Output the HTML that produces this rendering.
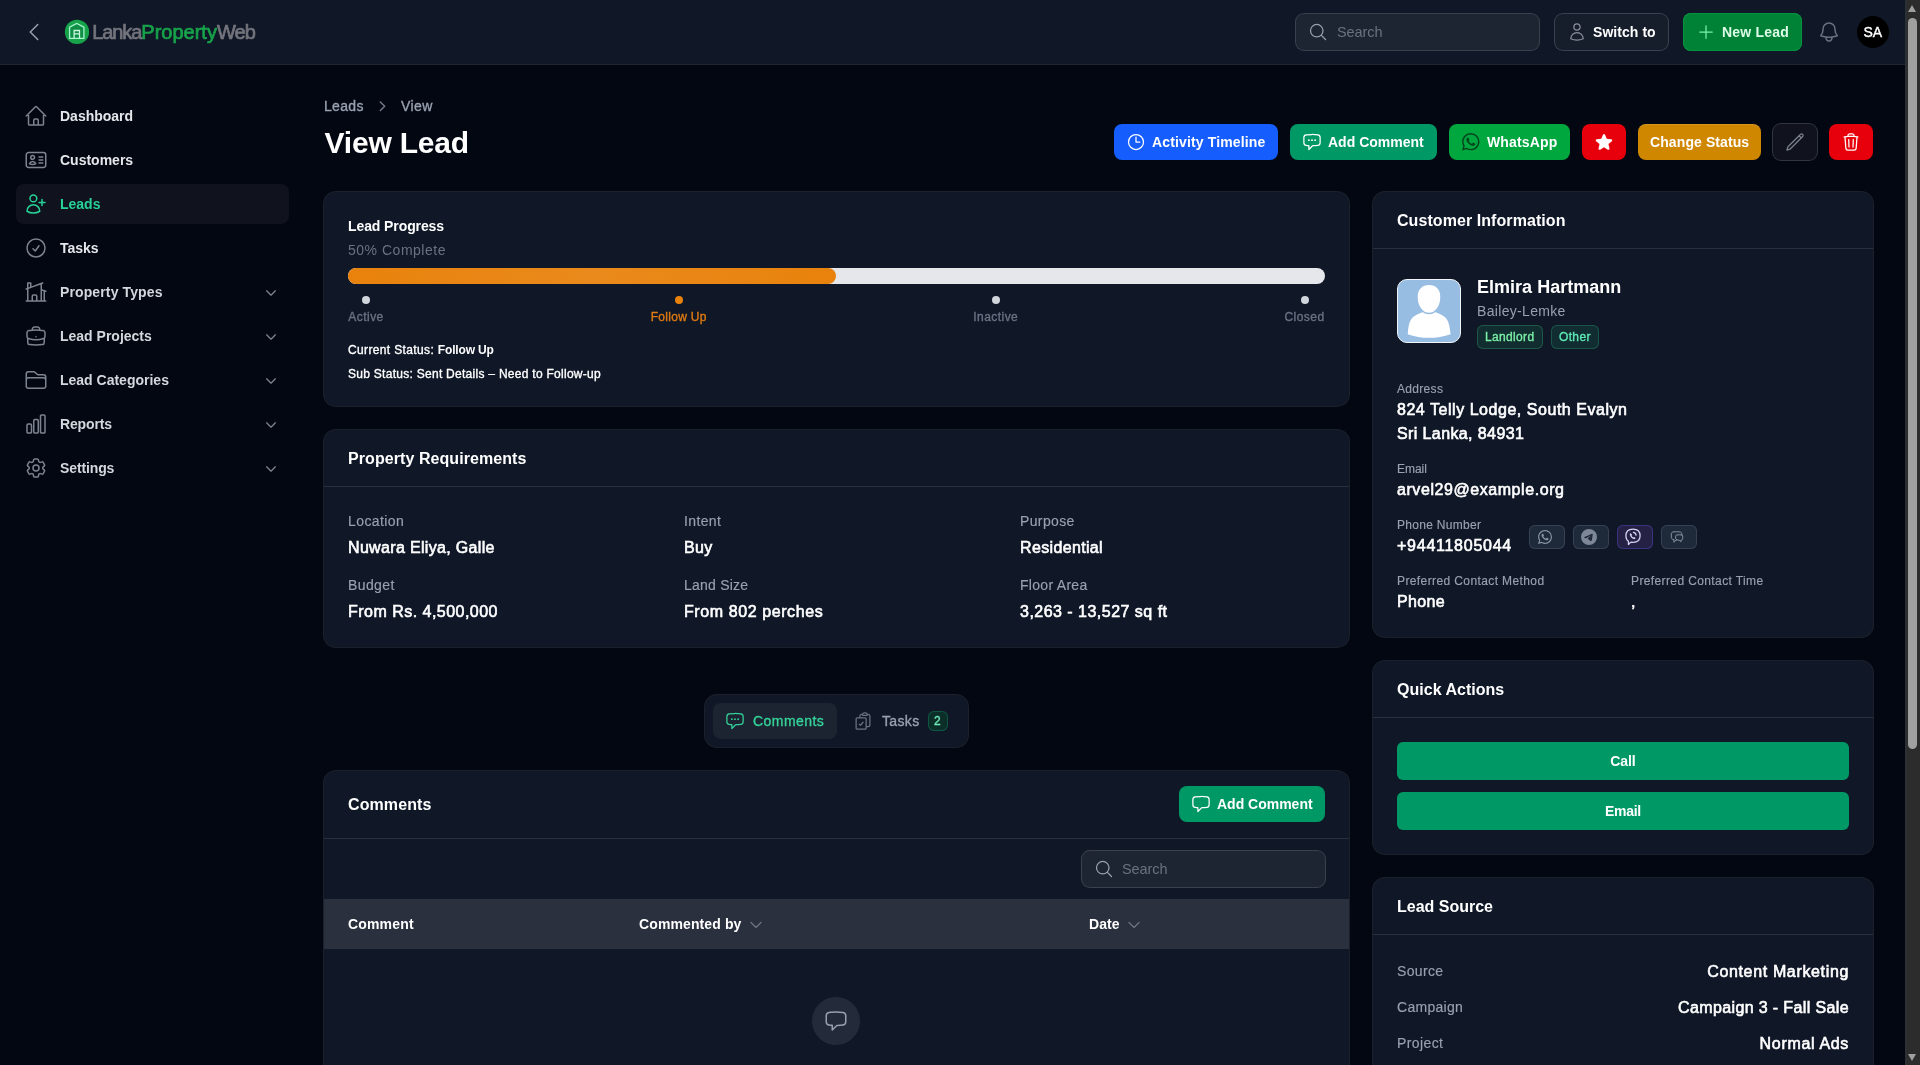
<!DOCTYPE html>
<html lang="en">
<head>
<meta charset="utf-8">
<title>View Lead - LankaPropertyWeb</title>
<style>
*{box-sizing:border-box;margin:0;padding:0}
html,body{width:1920px;height:1065px;overflow:hidden;background:#030712;color:#fff;
  font-family:"Liberation Sans",sans-serif;font-size:14px;line-height:20px}
svg{display:block}
.abs{position:absolute}
.ico{fill:none;stroke:currentColor;stroke-width:1.5;stroke-linecap:round;stroke-linejoin:round}
.t{position:absolute;white-space:nowrap;display:block}
.m{-webkit-text-stroke:0.35px currentColor}
.v{-webkit-text-stroke:0.600px currentColor}
.b{font-weight:700}
.cx{transform:translateX(-50%)}
/* topbar */
#topbar{position:absolute;left:0;top:0;width:1905px;height:64px;background:#101828;border-bottom:1px solid #1d2432;height:65px}
#sidebar,#main{position:absolute;left:0;top:0;width:0;height:0}
#topbar,#sidebar,#main{will-change:transform}
/* sidebar */
.nav{position:absolute;left:16px;width:273px;height:40px;border-radius:8px;color:#7d838f}
.nav svg.i{position:absolute;left:8px;top:8px;width:24px;height:24px}
.nav svg.c{position:absolute;left:248px;top:13.500px;width:14px;height:14px;stroke-width:2.200;color:#7d838f}
.nav .t{left:44px;top:10px;color:#e5e7eb;font-size:14px;line-height:20px}
.nav .t.g{color:#d4d7dd}
.nav.act{background:#10131e;color:#27d298}
.nav.act .t{color:#27d298}
/* cards */
.card{position:absolute;background:#101828;border-radius:12px;box-shadow:0 0 0 1px rgba(255,255,255,.1)}
.hr{position:absolute;left:0;right:0;height:1px;background:rgba(255,255,255,.1)}
.btn{position:absolute;height:36px;border-radius:8px;color:#fff}
.lbl{color:#99a1af;-webkit-text-stroke:0.150px currentColor}
/* scrollbar */
#sb{position:absolute;left:1905px;top:0;width:15px;height:1065px;background:#2c2c2c;border-left:2px solid #2c3032}
#sb .th{position:absolute;left:1px;top:18px;width:9px;height:731px;border-radius:5px;background:#a0a0a0}
#sb .up{position:absolute;left:1px;top:5px;width:0;height:0;border-left:4.5px solid transparent;border-right:4.5px solid transparent;border-bottom:7px solid #9f9f9f}
#sb .dn{position:absolute;left:1px;top:1054px;width:0;height:0;border-left:4.5px solid transparent;border-right:4.5px solid transparent;border-top:7px solid #9f9f9f}
</style>
</head>
<body>
<!-- TOPBAR -->
<header id="topbar">
  <svg class="abs ico" style="left:22px;top:20px;width:24px;height:24px;color:#99a1af" viewBox="0 0 24 24"><path d="M15.75 19.5 8.25 12l7.5-7.5"/></svg>
  <!-- logo -->
  <svg class="abs" style="left:64px;top:19px;width:26px;height:26px" viewBox="0 0 26 26">
    <circle cx="13" cy="12.900" r="12.150" fill="#16a34a"/>
    <path d="M5.600 19.400V8.100l7.150-3.700 7.150 3.700v11.300Z" fill="#0f8f45" stroke="#a7f3d0" stroke-width="1.300" stroke-linejoin="miter"/>
    <path d="M10.100 19.400v-7.900h5.400v7.900M10.100 14.900h5.400" fill="none" stroke="#c9f7de" stroke-width="1.300"/>
  </svg>
  <span class="t" id="logo" style="left:92.300px;top:20px;font-size:20px;line-height:24px;color:#74747c;-webkit-text-stroke:0.7px currentColor"><span style="letter-spacing:-1.100px">Lanka</span><span style="color:#17a34a;letter-spacing:0px">Property</span><span style="letter-spacing:-0.900px">Web</span></span>
  <!-- search -->
  <div class="abs" style="left:1296px;top:14px;width:243px;height:36px;border-radius:8px;background:#1d2432;box-shadow:0 0 0 1px #3a404d">
    <svg class="abs ico" style="left:12px;top:8px;width:20px;height:20px;color:#99a1af" viewBox="0 0 24 24"><path d="m21 21-5.197-5.197m0 0A7.5 7.5 0 1 0 5.196 5.196a7.5 7.5 0 0 0 10.607 10.607Z"/></svg>
    <span class="t" style="left:41px;top:8px;color:#6a7282;font-size:14.5px;letter-spacing:-0.076px">Search</span>
  </div>
  <!-- switch to -->
  <div class="btn" style="left:1555px;top:14px;width:113px;background:#161d2b;box-shadow:0 0 0 1px #3a4150">
    <svg class="abs ico" style="left:12px;top:8px;width:20px;height:20px;color:#8a909c" viewBox="0 0 24 24"><path d="M15.75 6a3.75 3.75 0 1 1-7.5 0 3.75 3.75 0 0 1 7.5 0ZM4.501 20.118a7.5 7.5 0 0 1 14.998 0A17.933 17.933 0 0 1 12 21.75c-2.676 0-5.216-.584-7.499-1.632Z"/></svg>
    <span class="t b" style="left:38px;top:8px;letter-spacing:0.057px">Switch to</span>
  </div>
  <!-- new lead -->
  <div class="btn" style="left:1683px;top:13px;width:119px;height:38px;background:#008236;color:#dcfce7;box-shadow:0 0 0 1px #06933f inset">
    <svg class="abs ico" style="left:13px;top:9px;width:20px;height:20px;color:#7bf1a8" viewBox="0 0 24 24"><path d="M12 4.500v15m7.500-7.500h-15"/></svg>
    <span class="t b" style="left:39px;top:9px;letter-spacing:0.193px">New Lead</span>
  </div>
  <!-- bell -->
  <svg class="abs ico" style="left:1817px;top:20px;width:24px;height:24px;color:#6a7282" viewBox="0 0 24 24"><path d="M14.857 17.082a23.848 23.848 0 0 0 5.454-1.31A8.967 8.967 0 0 1 18 9.75V9A6 6 0 0 0 6 9v.75a8.967 8.967 0 0 1-2.312 6.022c1.733.64 3.56 1.085 5.455 1.31m5.714 0a24.255 24.255 0 0 1-5.714 0m5.714 0a3 3 0 1 1-5.714 0"/></svg>
  <!-- avatar -->
  <div class="abs" style="left:1857px;top:16px;width:32px;height:32px;border-radius:50%;background:#000"></div>
  <span class="t m" style="left:1863.500px;top:22px;font-size:14px;color:#fff">SA</span>
</header>

<!-- SIDEBAR -->
<nav id="sidebar">
  <div class="nav" style="top:96px">
    <svg class="i ico" viewBox="0 0 24 24"><path d="m2.25 12 8.954-8.955c.44-.439 1.152-.439 1.591 0L21.75 12M4.5 9.75v10.125c0 .621.504 1.125 1.125 1.125H9.75v-4.875c0-.621.504-1.125 1.125-1.125h2.25c.621 0 1.125.504 1.125 1.125V21h4.125c.621 0 1.125-.504 1.125-1.125V9.75M8.25 21h8.25"/></svg>
    <span class="t b">Dashboard</span>
  </div>
  <div class="nav" style="top:140px">
    <svg class="i ico" viewBox="0 0 24 24"><path d="M15 9h3.75M15 12h3.75M15 15h3.75M4.5 19.5h15a2.25 2.25 0 0 0 2.25-2.25V6.75A2.25 2.25 0 0 0 19.5 4.5h-15a2.25 2.25 0 0 0-2.25 2.25v10.5A2.25 2.25 0 0 0 4.500 19.500Zm6-10.125a1.875 1.875 0 1 1-3.750 0 1.875 1.875 0 0 1 3.750 0Zm1.294 6.336a6.721 6.721 0 0 1-3.170.789 6.721 6.721 0 0 1-3.168-.789 3.376 3.376 0 0 1 6.338 0Z"/></svg>
    <span class="t b">Customers</span>
  </div>
  <div class="nav act" style="top:184px">
    <svg class="i ico" viewBox="0 0 24 24"><path d="M18 7.5v3m0 0v3m0-3h3m-3 0h-3m-2.250-4.125a3.375 3.375 0 1 1-6.750 0 3.375 3.375 0 0 1 6.750 0ZM3 19.235v-.110a6.375 6.375 0 0 1 12.750 0v.109A12.318 12.318 0 0 1 9.374 21c-2.331 0-4.512-.645-6.374-1.766Z"/></svg>
    <span class="t b">Leads</span>
  </div>
  <div class="nav" style="top:228px">
    <svg class="i ico" viewBox="0 0 24 24"><path d="M9 12.75 11.25 15 15 9.750M21 12a9 9 0 1 1-18 0 9 9 0 0 1 18 0Z"/></svg>
    <span class="t b">Tasks</span>
  </div>
  <div class="nav" style="top:272px">
    <svg class="i ico" viewBox="0 0 24 24"><path d="M8.250 21v-4.875c0-.621.504-1.125 1.125-1.125h2.250c.621 0 1.125.504 1.125 1.125V21m0 0h4.500V3.545M12.750 21h7.500V10.750M2.250 21h1.500m18 0h-18M2.250 9l4.500-1.636M18.750 3l-1.500.545m0 6.205 3 1m1.500.500-1.500-.500M6.750 7.364V3h-3v18m3-13.636 10.500-3.819"/></svg>
    <span class="t b g" style="letter-spacing:0.120px">Property Types</span>
    <svg class="c ico" viewBox="0 0 24 24"><path d="m19.500 8.250-7.500 7.500-7.500-7.500"/></svg>
  </div>
  <div class="nav" style="top:316px">
    <svg class="i ico" viewBox="0 0 24 24"><path d="M20.250 14.150v4.250c0 1.094-.787 2.036-1.872 2.180-2.087.277-4.216.420-6.378.420s-4.291-.143-6.378-.420c-1.085-.144-1.872-1.086-1.872-2.180v-4.250m16.500 0a2.180 2.180 0 0 0 .750-1.661V8.706c0-1.081-.768-2.015-1.837-2.175a48.114 48.114 0 0 0-3.413-.387m4.500 8.006c-.194.165-.420.295-.673.380A23.978 23.978 0 0 1 12 15.750c-2.648 0-5.195-.429-7.577-1.220a2.016 2.016 0 0 1-.673-.380m0 0A2.180 2.180 0 0 1 3 12.489V8.706c0-1.081.768-2.015 1.837-2.175a48.111 48.111 0 0 1 3.413-.387m7.500 0V5.250A2.250 2.250 0 0 0 13.500 3h-3a2.250 2.250 0 0 0-2.250 2.250v.894m7.500 0a48.667 48.667 0 0 0-7.500 0M12 12.750h.008v.008H12v-.008Z"/></svg>
    <span class="t b g">Lead Projects</span>
    <svg class="c ico" viewBox="0 0 24 24"><path d="m19.500 8.250-7.500 7.500-7.500-7.500"/></svg>
  </div>
  <div class="nav" style="top:360px">
    <svg class="i ico" viewBox="0 0 24 24"><path d="M2.250 12.750V12A2.250 2.250 0 0 1 4.500 9.750h15A2.250 2.250 0 0 1 21.750 12v.750m-8.690-6.440-2.120-2.120a1.500 1.500 0 0 0-1.061-.440H4.500A2.250 2.250 0 0 0 2.250 6v12a2.250 2.250 0 0 0 2.250 2.250h15A2.250 2.250 0 0 0 21.750 18V9a2.250 2.250 0 0 0-2.250-2.250h-5.379a1.500 1.500 0 0 1-1.060-.440Z"/></svg>
    <span class="t b g">Lead Categories</span>
    <svg class="c ico" viewBox="0 0 24 24"><path d="m19.500 8.250-7.500 7.500-7.500-7.500"/></svg>
  </div>
  <div class="nav" style="top:404px">
    <svg class="i ico" viewBox="0 0 24 24"><path d="M3 13.125C3 12.504 3.504 12 4.125 12h2.250c.621 0 1.125.504 1.125 1.125v6.750C7.500 20.496 6.996 21 6.375 21h-2.250A1.125 1.125 0 0 1 3 19.875v-6.750ZM9.750 8.625c0-.621.504-1.125 1.125-1.125h2.250c.621 0 1.125.504 1.125 1.125v11.250c0 .621-.504 1.125-1.125 1.125h-2.250a1.125 1.125 0 0 1-1.125-1.125V8.625ZM16.500 4.125c0-.621.504-1.125 1.125-1.125h2.250C20.496 3 21 3.504 21 4.125v15.750c0 .621-.504 1.125-1.125 1.125h-2.250a1.125 1.125 0 0 1-1.125-1.125V4.125Z"/></svg>
    <span class="t b g" style="letter-spacing:-0.150px">Reports</span>
    <svg class="c ico" viewBox="0 0 24 24"><path d="m19.500 8.250-7.500 7.500-7.500-7.500"/></svg>
  </div>
  <div class="nav" style="top:448px">
    <svg class="i ico" viewBox="0 0 24 24"><path d="M9.594 3.940c.090-.542.560-.940 1.110-.940h2.593c.550 0 1.020.398 1.110.940l.213 1.281c.063.374.313.686.645.870.074.040.147.083.220.127.325.196.720.257 1.075.124l1.217-.456a1.125 1.125 0 0 1 1.370.490l1.296 2.247a1.125 1.125 0 0 1-.260 1.431l-1.003.827c-.293.241-.438.613-.430.992a7.723 7.723 0 0 1 0 .255c-.008.378.137.750.430.991l1.004.827c.424.350.534.955.260 1.430l-1.298 2.247a1.125 1.125 0 0 1-1.369.491l-1.217-.456c-.355-.133-.750-.072-1.076.124a6.470 6.470 0 0 1-.220.128c-.331.183-.581.495-.644.869l-.213 1.281c-.090.543-.560.940-1.110.940h-2.594c-.550 0-1.019-.398-1.110-.940l-.213-1.281c-.062-.374-.312-.686-.644-.870a6.520 6.520 0 0 1-.220-.127c-.325-.196-.720-.257-1.076-.124l-1.217.456a1.125 1.125 0 0 1-1.369-.490l-1.297-2.247a1.125 1.125 0 0 1 .260-1.431l1.004-.827c.292-.240.437-.613.430-.991a6.932 6.932 0 0 1 0-.255c.007-.380-.138-.751-.430-.992l-1.004-.827a1.125 1.125 0 0 1-.260-1.430l1.297-2.247a1.125 1.125 0 0 1 1.370-.491l1.216.456c.356.133.751.072 1.076-.124.072-.044.146-.086.220-.128.332-.183.582-.495.644-.869l.214-1.280Z"/><path d="M15 12a3 3 0 1 1-6 0 3 3 0 0 1 6 0Z"/></svg>
    <span class="t b g" style="letter-spacing:-0.120px">Settings</span>
    <svg class="c ico" viewBox="0 0 24 24"><path d="m19.500 8.250-7.500 7.500-7.500-7.500"/></svg>
  </div>
</nav>

<main id="main">
  <!-- breadcrumbs -->
  <span class="t m" style="left:324px;top:96px;color:#99a1af;font-size:14px;letter-spacing:0.319px">Leads</span>
  <svg class="abs ico" style="left:372px;top:96px;width:20px;height:20px;color:#727987" viewBox="0 0 20 20"><path d="M8.300 6 12.700 10.250 8.300 14.500"/></svg>
  <span class="t m" style="left:401px;top:96px;color:#99a1af;font-size:14px;letter-spacing:0.414px">View</span>
  <h1 class="t b" style="left:324.500px;top:124.500px;font-size:30px;line-height:36px;letter-spacing:-0.188px">View Lead</h1>

  <!-- header actions -->
  <div class="btn" style="left:1114px;top:124px;width:164px;background:#155dfc">
    <svg class="abs ico" style="left:12px;top:8px;width:20px;height:20px" viewBox="0 0 24 24"><path d="M12 6v6h4.500m4.500 0a9 9 0 1 1-18 0 9 9 0 0 1 18 0Z"/></svg>
    <span class="t b" style="left:38px;top:8px;letter-spacing:0.146px">Activity Timeline</span>
  </div>
  <div class="btn" style="left:1290px;top:124px;width:147px;background:#009966">
    <svg class="abs ico" style="left:12px;top:8px;width:20px;height:20px" viewBox="0 0 24 24"><path d="M8.625 9.750a.375.375 0 1 1-.750 0 .375.375 0 0 1 .750 0Zm0 0H8.250m4.125 0a.375.375 0 1 1-.750 0 .375.375 0 0 1 .750 0Zm0 0H12m4.125 0a.375.375 0 1 1-.750 0 .375.375 0 0 1 .750 0Zm0 0h-.375m-13.500 3.010c0 1.600 1.123 2.994 2.707 3.227 1.087.160 2.185.283 3.293.369V21l4.184-4.183a1.140 1.140 0 0 1 .778-.332 48.294 48.294 0 0 0 5.830-.498c1.585-.233 2.708-1.626 2.708-3.228V6.741c0-1.602-1.123-2.995-2.707-3.228A48.394 48.394 0 0 0 12 3c-2.392 0-4.744.175-7.043.513C3.373 3.746 2.250 5.140 2.250 6.741v6.018Z"/></svg>
    <span class="t b" style="left:38px;top:8px;letter-spacing:0.007px">Add Comment</span>
  </div>
  <div class="btn" style="left:1449px;top:124px;width:121px;background:#00a63e">
    <svg class="abs" style="left:13px;top:9.200px;width:17.500px;height:17.500px;fill:#03441c" viewBox="0 0 24 24"><path d="M17.472 14.382c-.297-.149-1.758-.867-2.030-.967-.273-.099-.471-.148-.670.150-.197.297-.767.966-.940 1.164-.173.199-.347.223-.644.075-.297-.150-1.255-.463-2.390-1.475-.883-.788-1.480-1.761-1.653-2.059-.173-.297-.018-.458.130-.606.134-.133.298-.347.446-.520.149-.174.198-.298.298-.497.099-.198.050-.371-.025-.520-.075-.149-.669-1.612-.916-2.207-.242-.579-.487-.500-.669-.510-.173-.008-.371-.010-.570-.010-.198 0-.520.074-.792.372-.272.297-1.040 1.016-1.040 2.479 0 1.462 1.065 2.875 1.213 3.074.149.198 2.096 3.200 5.077 4.487.709.306 1.262.489 1.694.625.712.227 1.360.195 1.871.118.571-.085 1.758-.719 2.006-1.413.248-.694.248-1.289.173-1.413-.074-.124-.272-.198-.570-.347m-5.421 7.403h-.004a9.870 9.870 0 01-5.031-1.378l-.361-.214-3.741.982.998-3.648-.235-.374a9.860 9.860 0 01-1.510-5.260c.001-5.450 4.436-9.884 9.888-9.884 2.640 0 5.122 1.030 6.988 2.898a9.825 9.825 0 012.893 6.994c-.003 5.450-4.437 9.884-9.885 9.884m8.413-18.297A11.815 11.815 0 0012.050 0C5.495 0 .160 5.335.157 11.892c0 2.096.547 4.142 1.588 5.945L.057 24l6.305-1.654a11.882 11.882 0 005.683 1.448h.005c6.554 0 11.890-5.335 11.893-11.893a11.821 11.821 0 00-3.480-8.413Z"/></svg>
    <span class="t b" style="left:38px;top:8px;letter-spacing:0.16px">WhatsApp</span>
  </div>
  <div class="btn" style="left:1582px;top:124px;width:44px;background:#e7000b">
    <svg class="abs" style="left:12px;top:8px;width:20px;height:20px;fill:#fff" viewBox="0 0 24 24"><path d="M10.788 3.210c.448-1.077 1.976-1.077 2.424 0l2.082 5.006 5.404.434c1.164.093 1.636 1.545.749 2.305l-4.117 3.527 1.257 5.273c.271 1.136-.964 2.033-1.960 1.425L12 18.354 7.373 21.180c-.996.608-2.231-.290-1.960-1.425l1.257-5.273-4.117-3.527c-.887-.760-.415-2.212.749-2.305l5.404-.434 2.082-5.005Z"/></svg>
  </div>
  <div class="btn" style="left:1638px;top:124px;width:123px;background:#d08700;box-shadow:0 1px 0 0 rgba(255,255,255,.12) inset">
    <span class="t b" style="left:12px;top:8px;letter-spacing:0.095px">Change Status</span>
  </div>
  <div class="btn" style="left:1773px;top:124px;width:44px;background:#10131e;box-shadow:0 0 0 1px #30343f">
    <svg class="abs ico" style="left:12px;top:8px;width:20px;height:20px;color:#7a808c" viewBox="0 0 24 24"><path d="m16.862 4.487 1.687-1.688a1.875 1.875 0 1 1 2.652 2.652L6.832 19.820a4.500 4.500 0 0 1-1.897 1.130l-2.685.800.800-2.685a4.500 4.500 0 0 1 1.130-1.897L16.863 4.487Zm0 0L19.500 7.125"/></svg>
  </div>
  <div class="btn" style="left:1829px;top:124px;width:44px;background:#e7000b">
    <svg class="abs ico" style="left:12px;top:8px;width:20px;height:20px" viewBox="0 0 24 24"><path d="m14.740 9-.346 9m-4.788 0L9.260 9m9.968-3.210c.342.052.682.107 1.022.166m-1.022-.165L18.160 19.673a2.250 2.250 0 0 1-2.244 2.077H8.084a2.250 2.250 0 0 1-2.244-2.077L4.772 5.790m14.456 0a48.108 48.108 0 0 0-3.478-.397m-12 .562c.340-.059.680-.114 1.022-.165m0 0a48.110 48.110 0 0 1 3.478-.397m7.500 0v-.916c0-1.180-.910-2.164-2.090-2.201a51.964 51.964 0 0 0-3.320 0c-1.180.037-2.090 1.022-2.090 2.201v.916m7.500 0a48.667 48.667 0 0 0-7.500 0"/></svg>
  </div>

  <!-- Lead progress card -->
  <section class="card" style="left:324px;top:192px;width:1025px;height:214px">
    <span class="t b" style="left:24px;top:24px;font-size:14px;letter-spacing:-0.097px">Lead Progress</span>
    <span class="t" style="left:24px;top:48px;font-size:14px;color:#6a7282;letter-spacing:0.514px">50% Complete</span>
    <div class="abs" style="left:24px;top:76px;width:977px;height:16px;border-radius:8px;background:#e5e7eb"></div>
    <div class="abs" style="left:24px;top:76px;width:488px;height:16px;border-radius:8px;background:linear-gradient(90deg,#e8820c,#ea8a1c 50%,#e8820c)"></div>
    <i class="abs" style="left:38px;top:104px;width:8px;height:8px;border-radius:50%;background:#d1d5dc"></i>
    <span class="t m cx" style="left:42px;top:117px;font-size:12px;line-height:16px;color:#6a7282;letter-spacing:0.469px">Active</span>
    <i class="abs" style="left:351px;top:104px;width:8px;height:8px;border-radius:50%;background:#e8820c"></i>
    <span class="t m cx" style="left:354.750px;top:117px;font-size:12px;line-height:16px;color:#e07a10;letter-spacing:0.293px">Follow Up</span>
    <i class="abs" style="left:668px;top:104px;width:8px;height:8px;border-radius:50%;background:#d1d5dc"></i>
    <span class="t m cx" style="left:671.750px;top:117px;font-size:12px;line-height:16px;color:#6a7282;letter-spacing:0.455px">Inactive</span>
    <i class="abs" style="left:977px;top:104px;width:8px;height:8px;border-radius:50%;background:#d1d5dc"></i>
    <span class="t m cx" style="left:980.500px;top:117px;font-size:12px;line-height:16px;color:#6a7282;letter-spacing:0.44px">Closed</span>
    <span class="t m" style="left:24px;top:150px;font-size:12px;line-height:16px;letter-spacing:0.360px">Current Status: <span class="b" style="-webkit-text-stroke:0;letter-spacing:-0.150px">Follow Up</span></span>
    <span class="t m" style="left:24px;top:174px;font-size:12px;line-height:16px;letter-spacing:0.277px">Sub Status: Sent Details – Need to Follow-up</span>
  </section>

  <!-- Property requirements -->
  <section class="card" style="left:324px;top:430px;width:1025px;height:217px">
    <span class="t b" style="left:24px;top:17px;font-size:16px;line-height:24px;letter-spacing:0.074px">Property Requirements</span>
    <div class="hr" style="top:56px"></div>
    <span class="t lbl" style="left:24px;top:81px;letter-spacing:0.414px">Location</span>
    <span class="t m v" style="left:24px;top:106px;font-size:16px;line-height:24px;letter-spacing:0.329px">Nuwara Eliya, Galle</span>
    <span class="t lbl" style="left:360px;top:81px;letter-spacing:0.37px">Intent</span>
    <span class="t m v" style="left:360px;top:106px;font-size:16px;line-height:24px;letter-spacing:0.391px">Buy</span>
    <span class="t lbl" style="left:696px;top:81px;letter-spacing:0.371px">Purpose</span>
    <span class="t m v" style="left:696px;top:106px;font-size:16px;line-height:24px;letter-spacing:0.349px">Residential</span>
    <span class="t lbl" style="left:24px;top:145px;letter-spacing:0.396px">Budget</span>
    <span class="t m v" style="left:24px;top:170px;font-size:16px;line-height:24px;letter-spacing:0.477px">From Rs. 4,500,000</span>
    <span class="t lbl" style="left:360px;top:145px;letter-spacing:0.219px">Land Size</span>
    <span class="t m v" style="left:360px;top:170px;font-size:16px;line-height:24px;letter-spacing:0.588px">From 802 perches</span>
    <span class="t lbl" style="left:696px;top:145px;letter-spacing:0.291px">Floor Area</span>
    <span class="t m v" style="left:696px;top:170px;font-size:16px;line-height:24px;letter-spacing:0.481px">3,263 - 13,527 sq ft</span>
  </section>
  <!-- Tabs -->
  <div class="abs" style="left:705px;top:695px;width:263px;height:52px;border-radius:12px;background:#101828;box-shadow:0 0 0 1px rgba(255,255,255,.1)">
    <div class="abs" style="left:8px;top:8px;width:124px;height:36px;border-radius:8px;background:#1c2331"></div>
    <svg class="abs ico" style="left:20px;top:16px;width:20px;height:20px;color:#34d399" viewBox="0 0 24 24"><path d="M8.625 9.750a.375.375 0 1 1-.750 0 .375.375 0 0 1 .750 0Zm0 0H8.250m4.125 0a.375.375 0 1 1-.750 0 .375.375 0 0 1 .750 0Zm0 0H12m4.125 0a.375.375 0 1 1-.750 0 .375.375 0 0 1 .750 0Zm0 0h-.375m-13.500 3.010c0 1.600 1.123 2.994 2.707 3.227 1.087.160 2.185.283 3.293.369V21l4.184-4.183a1.140 1.140 0 0 1 .778-.332 48.294 48.294 0 0 0 5.830-.498c1.585-.233 2.708-1.626 2.708-3.228V6.741c0-1.602-1.123-2.995-2.707-3.228A48.394 48.394 0 0 0 12 3c-2.392 0-4.744.175-7.043.513C3.373 3.746 2.250 5.140 2.250 6.741v6.018Z"/></svg>
    <span class="t m" style="left:48px;top:16px;color:#34d399;letter-spacing:0.445px">Comments</span>
    <svg class="abs ico" style="left:148px;top:16px;width:20px;height:20px;color:#6a7282" viewBox="0 0 24 24"><path d="M11.350 3.836c-.065.210-.100.433-.100.664 0 .414.336.750.750.750h4.500a.750.750 0 0 0 .750-.750 2.250 2.250 0 0 0-.100-.664m-5.800 0A2.251 2.251 0 0 1 13.500 2.250H15c1.012 0 1.867.668 2.150 1.586m-5.800 0c-.376.023-.750.050-1.124.080C9.095 4.010 8.250 4.973 8.250 6.108V8.250m8.900-4.414c.376.023.750.050 1.124.080 1.131.094 1.976 1.057 1.976 2.192V16.500A2.250 2.250 0 0 1 18 18.750h-2.250m-7.500-10.500H4.875c-.621 0-1.125.504-1.125 1.125v11.250c0 .621.504 1.125 1.125 1.125h9.750c.621 0 1.125-.504 1.125-1.125V18.750m-7.500-10.500h6.375c.621 0 1.125.504 1.125 1.125v9.375m-8.250-3 1.500 1.500 3-3.750"/></svg>
    <span class="t m" style="left:177px;top:16px;color:#99a1af;letter-spacing:0.341px">Tasks</span>
    <div class="abs" style="left:223px;top:16px;width:20px;height:20px;border-radius:6px;background:#0c2e28;box-shadow:0 0 0 1px #0f5643 inset"></div>
    <span class="t m" style="left:229px;top:18px;font-size:12px;line-height:16px;color:#6ee7b7">2</span>
  </div>

  <!-- Comments card -->
  <section class="card" style="left:324px;top:771px;width:1025px;height:320px;overflow:hidden">
    <span class="t b" style="left:24px;top:22px;font-size:16px;line-height:24px;letter-spacing:0.102px">Comments</span>
    <div class="btn" style="left:855px;top:15px;width:146px;background:#009966">
      <svg class="abs ico" style="left:12px;top:8px;width:20px;height:20px" viewBox="0 0 24 24"><path d="M2.250 12.760c0 1.600 1.123 2.994 2.707 3.227 1.087.160 2.185.283 3.293.369V21l4.076-4.076a1.526 1.526 0 0 1 1.037-.443 48.282 48.282 0 0 0 5.680-.494c1.584-.233 2.707-1.626 2.707-3.228V6.741c0-1.602-1.123-2.995-2.707-3.228A48.394 48.394 0 0 0 12 3c-2.392 0-4.744.175-7.043.513C3.373 3.746 2.250 5.140 2.250 6.741v6.018Z"/></svg>
      <span class="t b" style="left:38px;top:8px;letter-spacing:-0.007px">Add Comment</span>
    </div>
    <div class="hr" style="top:67px"></div>
    <div class="abs" style="left:758px;top:80px;width:243px;height:36px;border-radius:8px;background:#1d2432;box-shadow:0 0 0 1px #3a404d">
      <svg class="abs ico" style="left:12px;top:8px;width:20px;height:20px;color:#99a1af" viewBox="0 0 24 24"><path d="m21 21-5.197-5.197m0 0A7.500 7.500 0 1 0 5.196 5.196a7.500 7.500 0 0 0 10.607 10.607Z"/></svg>
      <span class="t" style="left:40px;top:8px;color:#6a7282;font-size:14.5px;letter-spacing:-0.076px">Search</span>
    </div>
    <div class="abs" style="left:0;top:128px;width:1025px;height:50px;background:#2a303e"></div>
    <span class="t b" style="left:24px;top:143px;letter-spacing:0.17px">Comment</span>
    <span class="t b" style="left:315px;top:143px;letter-spacing:0.115px">Commented by</span>
    <svg class="abs ico" style="left:423.500px;top:145.500px;width:16px;height:16px;color:#6a7282;stroke-width:2" viewBox="0 0 24 24"><path d="m19.500 8.250-7.500 7.500-7.500-7.500"/></svg>
    <span class="t b" style="left:765px;top:143px;letter-spacing:0.06px">Date</span>
    <svg class="abs ico" style="left:802px;top:145.500px;width:16px;height:16px;color:#6a7282;stroke-width:2" viewBox="0 0 24 24"><path d="m19.500 8.250-7.500 7.500-7.500-7.500"/></svg>
    <div class="abs" style="left:488px;top:226px;width:48px;height:48px;border-radius:50%;background:#232b3a"></div>
    <svg class="abs ico" style="left:500px;top:238px;width:24px;height:24px;color:#99a1af" viewBox="0 0 24 24"><path d="M2.250 12.760c0 1.600 1.123 2.994 2.707 3.227 1.087.160 2.185.283 3.293.369V21l4.076-4.076a1.526 1.526 0 0 1 1.037-.443 48.282 48.282 0 0 0 5.680-.494c1.584-.233 2.707-1.626 2.707-3.228V6.741c0-1.602-1.123-2.995-2.707-3.228A48.394 48.394 0 0 0 12 3c-2.392 0-4.744.175-7.043.513C3.373 3.746 2.250 5.140 2.250 6.741v6.018Z"/></svg>
  </section>

  <!-- Customer Information -->
  <section class="card" style="left:1373px;top:192px;width:500px;height:445px">
    <span class="t b" style="left:24px;top:17px;font-size:16px;line-height:24px;letter-spacing:0.069px">Customer Information</span>
    <div class="hr" style="top:56px"></div>
    <!-- avatar -->
    <svg class="abs" style="left:24px;top:87px;width:64px;height:64px" viewBox="0 0 64 64">
      <rect x="0.500" y="0.500" width="63" height="63" rx="9.500" fill="#98bde3" stroke="#f1f5fa" stroke-width="1"/>
      <path d="M10.800 55.200C11.200 47 12.500 41 16.500 37.800c3-2.400 6.500-3.600 9-4.600h13c2.500 1 6 2.200 9 4.600 4 3.200 5.300 9.200 6.100 17.400C47 57.700 39 58.800 32 58.800S17 57.700 10.800 55.200Z" fill="#fff"/>
      <path d="M32 5.400c7.500 0 12 5 12 12.500 0 9-5.300 16.600-12 16.600S20 26.900 20 17.900c0-7.500 4.500-12.500 12-12.500Z" fill="#fff" stroke="#98bde3" stroke-width="1.400"/>
    </svg>
    <span class="t b" style="left:104px;top:81px;font-size:18px;line-height:28px;letter-spacing:0.014px">Elmira Hartmann</span>
    <span class="t" style="left:104px;top:109px;font-size:14px;color:#99a1af;letter-spacing:0.327px">Bailey-Lemke</span>
    <div class="abs" style="left:104px;top:133px;width:66px;height:24px;border-radius:6px;background:#122d2f;box-shadow:0 0 0 1px #1d5746 inset"></div>
    <span class="t m" style="left:112px;top:137px;font-size:12px;line-height:16px;color:#7bf1a8;letter-spacing:0.348px">Landlord</span>
    <div class="abs" style="left:178px;top:133px;width:48px;height:24px;border-radius:6px;background:#112d31;box-shadow:0 0 0 1px #1a554a inset"></div>
    <span class="t m" style="left:186px;top:137px;font-size:12px;line-height:16px;color:#5ee9b5;letter-spacing:0.347px">Other</span>

    <span class="t lbl" style="left:24px;top:189px;font-size:12px;line-height:16px;letter-spacing:0.317px">Address</span>
    <span class="t m v" style="left:24px;top:206px;font-size:16px;line-height:24px;letter-spacing:0.536px">824 Telly Lodge, South Evalyn</span>
    <span class="t m v" style="left:24px;top:230px;font-size:16px;line-height:24px;letter-spacing:0.392px">Sri Lanka, 84931</span>
    <span class="t lbl" style="left:24px;top:269px;font-size:12px;line-height:16px;letter-spacing:-0.053px">Email</span>
    <span class="t m v" style="left:24px;top:285.500px;font-size:16px;line-height:24px;letter-spacing:0.565px">arvel29@example.org</span>
    <span class="t lbl" style="left:24px;top:325px;font-size:12px;line-height:16px;letter-spacing:0.294px">Phone Number</span>
    <span class="t m v" style="left:24px;top:342px;font-size:16px;line-height:24px;letter-spacing:0.746px">+94411805044</span>
    <!-- messenger buttons -->
    <div class="abs" style="left:156px;top:333px;width:36px;height:24px;border-radius:6px;background:#1e2939;box-shadow:0 0 0 1px #364153 inset">
      <svg class="abs" style="left:9px;top:5px;width:14px;height:14px;fill:#8b94a3" viewBox="0 0 24 24"><path d="M17.472 14.382c-.297-.149-1.758-.867-2.030-.967-.273-.099-.471-.148-.670.150-.197.297-.767.966-.940 1.164-.173.199-.347.223-.644.075-.297-.150-1.255-.463-2.390-1.475-.883-.788-1.480-1.761-1.653-2.059-.173-.297-.018-.458.130-.606.134-.133.298-.347.446-.520.149-.174.198-.298.298-.497.099-.198.050-.371-.025-.520-.075-.149-.669-1.612-.916-2.207-.242-.579-.487-.500-.669-.510-.173-.008-.371-.010-.570-.010-.198 0-.520.074-.792.372-.272.297-1.040 1.016-1.040 2.479 0 1.462 1.065 2.875 1.213 3.074.149.198 2.096 3.200 5.077 4.487.709.306 1.262.489 1.694.625.712.227 1.360.195 1.871.118.571-.085 1.758-.719 2.006-1.413.248-.694.248-1.289.173-1.413-.074-.124-.272-.198-.570-.347m-5.421 7.403h-.004a9.870 9.870 0 01-5.031-1.378l-.361-.214-3.741.982.998-3.648-.235-.374a9.860 9.860 0 01-1.510-5.260c.001-5.450 4.436-9.884 9.888-9.884 2.640 0 5.122 1.030 6.988 2.898a9.825 9.825 0 012.893 6.994c-.003 5.450-4.437 9.884-9.885 9.884m8.413-18.297A11.815 11.815 0 0012.050 0C5.495 0 .160 5.335.157 11.892c0 2.096.547 4.142 1.588 5.945L.057 24l6.305-1.654a11.882 11.882 0 005.683 1.448h.005c6.554 0 11.890-5.335 11.893-11.893a11.821 11.821 0 00-3.480-8.413Z"/></svg>
    </div>
    <div class="abs" style="left:200px;top:333px;width:36px;height:24px;border-radius:6px;background:#1e2939;box-shadow:0 0 0 1px #364153 inset">
      <svg class="abs" style="left:8px;top:4px;width:16px;height:16px;fill:#7d8798" viewBox="0 0 24 24"><path d="M11.944 0A12 12 0 0 0 0 12a12 12 0 0 0 12 12 12 12 0 0 0 12-12A12 12 0 0 0 12 0a12 12 0 0 0-.056 0zm4.962 7.224c.100-.002.321.023.465.140a.506.506 0 0 1 .171.325c.016.093.036.306.020.472-.180 1.898-.962 6.502-1.360 8.627-.168.900-.499 1.201-.820 1.230-.696.065-1.225-.460-1.900-.902-1.056-.693-1.653-1.124-2.678-1.800-1.185-.780-.417-1.210.258-1.910.177-.184 3.247-2.977 3.307-3.230.007-.032.014-.150-.056-.212s-.174-.041-.249-.024c-.106.024-1.793 1.140-5.061 3.345-.480.330-.913.490-1.302.480-.428-.008-1.252-.241-1.865-.440-.752-.245-1.349-.374-1.297-.789.027-.216.325-.437.893-.663 3.498-1.524 5.830-2.529 6.998-3.014 3.332-1.386 4.025-1.627 4.476-1.635z"/></svg>
    </div>
    <div class="abs" style="left:244px;top:333px;width:36px;height:24px;border-radius:6px;background:#242145;box-shadow:0 0 0 1px #3b3380 inset">
      <svg class="abs" style="left:6px;top:2px;width:20px;height:20px;fill:none;stroke:#d8d0f5;stroke-width:1.500;stroke-linecap:round;stroke-linejoin:round" viewBox="0 0 24 24"><path d="M12 2.500c-5 0-8.500 2.200-8.500 8 0 3.200 1 5.300 3 6.600V21l3-2.800c.800.100 1.600.200 2.500.200 5 0 8.500-2.200 8.500-7.900s-3.500-8-8.500-8Z"/><path d="M9 7.500c-.600.300-1 .900-.800 1.700.600 2.400 2.300 4.400 4.800 5.300.800.300 1.500-.100 1.800-.700l.300-.700-1.800-1.200-.800.700c-1-.400-1.900-1.300-2.300-2.300l.700-.800-1.200-1.800Z" fill="#d8d0f5" stroke="none"/><path d="M12.500 6.500c1.800.200 3 1.400 3.200 3.200"/></svg>
    </div>
    <div class="abs" style="left:288px;top:333px;width:36px;height:24px;border-radius:6px;background:#1e2939;box-shadow:0 0 0 1px #364153 inset">
      <svg class="abs ico" style="left:9px;top:5px;width:14px;height:14px;color:#8b94a3;stroke-width:1.700" viewBox="0 0 24 24"><path d="M20.250 8.511c.884.284 1.500 1.128 1.500 2.097v4.286c0 1.136-.847 2.100-1.980 2.193-.340.027-.680.052-1.020.072v3.091l-3-3c-1.354 0-2.694-.055-4.020-.163a2.115 2.115 0 0 1-.825-.242m9.345-8.334a2.126 2.126 0 0 0-.476-.095 48.640 48.640 0 0 0-8.048 0c-1.131.094-1.976 1.057-1.976 2.192v4.286c0 .837.460 1.580 1.155 1.951m9.345-8.334V6.637c0-1.621-1.152-3.026-2.760-3.235A48.455 48.455 0 0 0 11.250 3c-2.115 0-4.198.137-6.240.402-1.608.209-2.760 1.614-2.760 3.235v6.226c0 1.621 1.152 3.026 2.760 3.235.577.075 1.157.140 1.740.194V21l4.155-4.155"/></svg>
    </div>
    <span class="t lbl" style="left:24px;top:381px;font-size:12px;line-height:16px;letter-spacing:0.393px">Preferred Contact Method</span>
    <span class="t m v" style="left:24px;top:398px;font-size:16px;line-height:24px;letter-spacing:0.347px">Phone</span>
    <span class="t lbl" style="left:258px;top:381px;font-size:12px;line-height:16px;letter-spacing:0.384px">Preferred Contact Time</span>
    <span class="t m v" style="left:258px;top:398px;font-size:16px;line-height:24px">,</span>
  </section>

  <!-- Quick Actions -->
  <section class="card" style="left:1373px;top:661px;width:500px;height:193px">
    <span class="t b" style="left:24px;top:17px;font-size:16px;line-height:24px;letter-spacing:0.02px">Quick Actions</span>
    <div class="hr" style="top:56px"></div>
    <div class="btn" style="left:24px;top:81px;width:452px;height:38px;border-radius:6px;background:#009966"></div>
    <span class="t b cx" style="left:250px;top:90px;letter-spacing:-0.072px">Call</span>
    <div class="btn" style="left:24px;top:131px;width:452px;height:38px;border-radius:6px;background:#009966"></div>
    <span class="t b cx" style="left:250px;top:140px;letter-spacing:-0.272px">Email</span>
  </section>

  <!-- Lead Source -->
  <section class="card" style="left:1373px;top:878px;width:500px;height:230px">
    <span class="t b" style="left:24px;top:17px;font-size:16px;line-height:24px;letter-spacing:-0.003px">Lead Source</span>
    <div class="hr" style="top:56px"></div>
    <span class="t lbl" style="left:24px;top:83px;letter-spacing:0.34px">Source</span>
    <span class="t m v" style="right:24px;top:82px;font-size:16px;line-height:24px;letter-spacing:0.651px">Content Marketing</span>
    <span class="t lbl" style="left:24px;top:119px;letter-spacing:0.296px">Campaign</span>
    <span class="t m v" style="right:24px;top:118px;font-size:16px;line-height:24px;letter-spacing:0.375px">Campaign 3 - Fall Sale</span>
    <span class="t lbl" style="left:24px;top:155px;letter-spacing:0.403px">Project</span>
    <span class="t m v" style="right:24px;top:154px;font-size:16px;line-height:24px;letter-spacing:0.67px">Normal Ads</span>
  </section>

</main>


<!-- scrollbar -->
<div id="sb"><div class="up"></div><div class="th"></div><div class="dn"></div></div>
</body>
</html>
